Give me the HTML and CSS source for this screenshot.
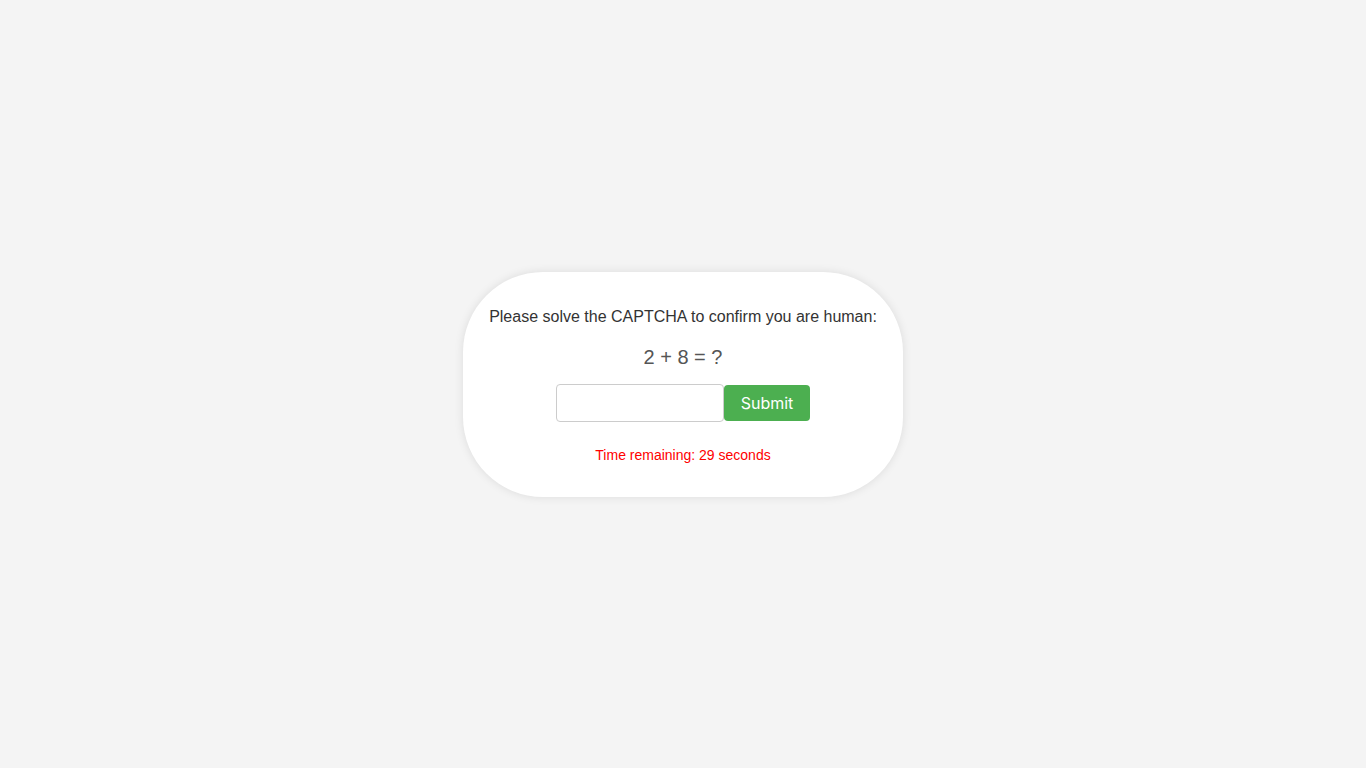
FILE: index.html
```html
<!DOCTYPE html>
<html lang="en">
<head>
  <meta charset="UTF-8">
  <title>CAPTCHA</title>
  <link rel="stylesheet" href="styles.css">
</head>
<body>
  <div class="captcha-box">
    <p class="prompt">Please solve the CAPTCHA to confirm you are human:</p>
    <div class="equation">2 + 8 = ?</div>
    <div class="answer-row">
      <input type="text" class="answer">
      <button class="submit">Submit</button>
    </div>
    <p class="timer">Time remaining: 29 seconds</p>
  </div>
</body>
</html>
```

FILE: styles.css
```css
html, body {
  height: 100%;
}
body {
  margin: 0;
  background: #f4f4f4;
  font-family: "Liberation Sans", Arial, sans-serif;
  display: flex;
  align-items: center;
  justify-content: center;
}
.captcha-box {
  width: 440px;
  box-sizing: border-box;
  background: #fff;
  border-radius: 80px;
  padding: 20px 0;
  text-align: center;
  box-shadow: 0 0 10px rgba(0, 0, 0, 0.1);
}
.prompt {
  margin: 16px 0;
  font-size: 16px;
  color: #333;
}
.equation {
  margin: 20px 0 15px;
  font-size: 20px;
  color: #555;
}
.answer-row {
  display: flex;
  justify-content: center;
  align-items: center;
}
.answer {
  width: 168px;
  height: 38px;
  box-sizing: border-box;
  border: 1px solid #ccc;
  border-radius: 4px;
  padding: 8px;
  font-size: 16px;
  margin: 0;
}
.submit {
  height: 36px;
  padding: 0 17px;
  background: #4caf50;
  color: #fff;
  border: none;
  border-radius: 4px;
  font-family: Inter, sans-serif;
  font-size: 16px;
  cursor: pointer;
}
.timer {
  margin: 25px 0 14px;
  font-size: 14px;
  color: #f00;
}
```
